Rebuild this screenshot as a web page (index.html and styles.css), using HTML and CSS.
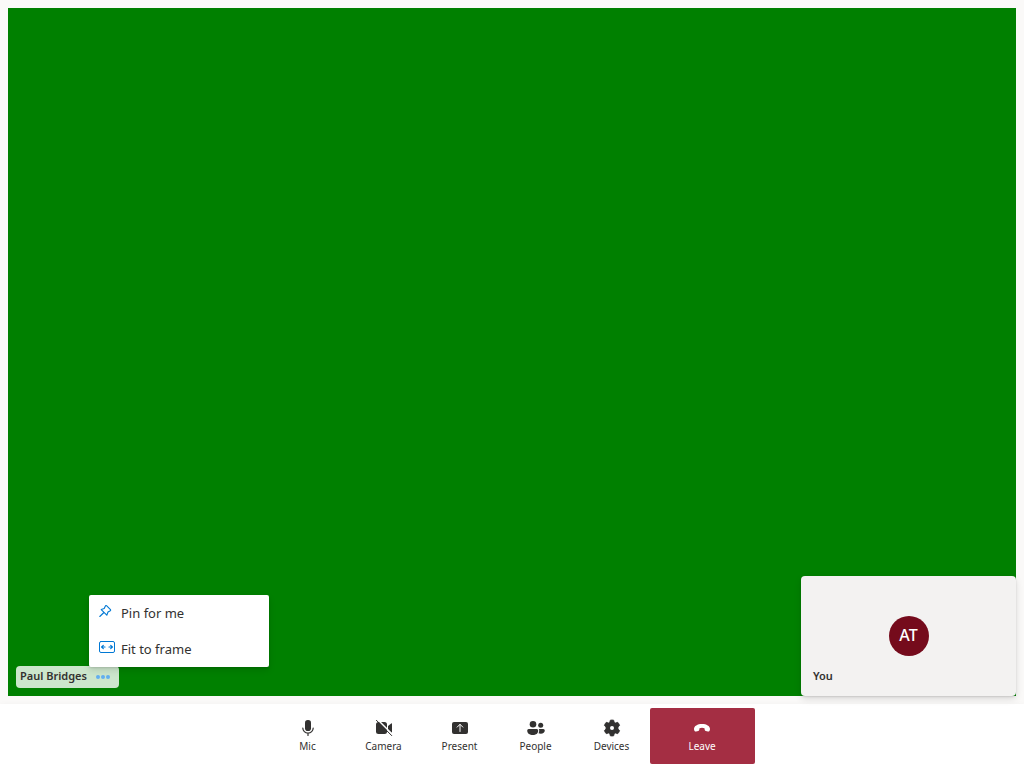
FILE: index.html
```html
<!DOCTYPE html>
<html lang="en">
<head>
<meta charset="utf-8">
<meta name="viewport" content="width=device-width, initial-scale=1">
<title>Call</title>
<link rel="stylesheet" href="styles.css">
</head>
<body>
<div class="call">
  <main class="stage">
    <section class="remote" aria-label="Video of Paul Bridges">
      <div class="name-tag">
        <span class="name">Paul Bridges</span>
        <button class="more" type="button" aria-label="More options" aria-expanded="true">
          <svg width="14" height="4" viewBox="0 0 14 4" fill="#62aff0" aria-hidden="true"><circle cx="2" cy="2" r="2"/><circle cx="7" cy="2" r="2"/><circle cx="12" cy="2" r="2"/></svg>
        </button>
        <div class="menu" role="menu">
          <button class="menu-item" type="button" role="menuitem">
            <svg width="16" height="16" viewBox="0 0 16 16" fill="none" stroke="#0078d4" stroke-width="1.1" stroke-linejoin="round" stroke-linecap="round" aria-hidden="true"><path d="M7.500 2.600 11.500 6.600Q12 7.300 11.300 7.800L9 9 7.800 12.200 2.200 6.600 5.200 5.500 6.400 3Q6.900 2.200 7.500 2.600ZM4.900 9.500.8 13.500"/></svg>
            <span>Pin for me</span>
          </button>
          <button class="menu-item" type="button" role="menuitem">
            <svg width="16" height="16" viewBox="0 0 16 16" fill="none" stroke="#0078d4" stroke-linejoin="round" stroke-linecap="round" aria-hidden="true"><rect x=".5" y="2.500" width="15" height="11" rx="1.500"/><path d="M6 8H2.800M4.300 6.300 2.600 8l1.700 1.700M10 8h3.200m-1.500-1.700L13.400 8l-1.700 1.700" stroke-width="1.200"/></svg>
            <span>Fit to frame</span>
          </button>
        </div>
      </div>
    </section>
    <section class="self" aria-label="Your video">
      <div class="avatar">AT</div>
      <div class="self-name">You</div>
    </section>
  </main>
  <footer class="controls">
    <button class="control" type="button">
      <svg width="20" height="20" viewBox="0 0 20 20" aria-hidden="true"><rect x="7" y="2" width="6" height="11" rx="2.800" fill="currentColor"/><path d="M4.800 10a5.200 5.200 0 0 0 10.400 0M10 15.200v2.300" fill="none" stroke="currentColor" stroke-width="1.200" stroke-linecap="round"/></svg>
      <span>Mic</span>
    </button>
    <button class="control" type="button">
      <svg width="20" height="20" viewBox="0 0 20 20" aria-hidden="true"><rect x="2" y="4" width="11" height="12" rx="2.500" fill="currentColor"/><path d="M14 8 17.200 5.400Q18 5 18 5.800v8.400q0 .8-.8.400L14 12Z" fill="currentColor"/><path d="M3.500 1.500 18.800 16.800" stroke="#fff" stroke-width="1.500"/><path d="m2.400 2.300 15.300 15.300" stroke="currentColor" stroke-linecap="round"/></svg>
      <span>Camera</span>
    </button>
    <button class="control" type="button">
      <svg width="20" height="20" viewBox="0 0 20 20" aria-hidden="true"><rect x="2" y="4" width="16" height="12" rx="2" fill="currentColor"/><path d="M10 13.500v-7M7.200 9.100 10 6.300l2.800 2.800" fill="none" stroke="#fff" stroke-linecap="round" stroke-linejoin="round"/></svg>
      <span>Present</span>
    </button>
    <button class="control" type="button">
      <svg width="20" height="20" viewBox="0 0 20 20" fill="currentColor" aria-hidden="true"><circle cx="7" cy="6.200" r="3.300"/><circle cx="14.700" cy="7.200" r="2.500"/><path d="M2.700 11h8.100A1.500 1.500 0 0 1 12.200 12.500C12.200 15.500 10 17 6.900 17s-5.700-1.500-5.700-4.500A1.500 1.500 0 0 1 2.700 11ZM12.700 11h4.600a1.500 1.500 0 0 1 1.500 1.500c0 2-1.600 3.200-4 3.200q-1.300 0-2.300-.4.700-1.200.7-2.800 0-.9-.5-1.500Z"/></svg>
      <span>People</span>
    </button>
    <button class="control" type="button">
      <svg width="20" height="20" viewBox="0 0 20 20" aria-hidden="true"><path d="M8.300 2.200Q10 1.800 11.700 2.200l.5 2.100 1.300.7 2.200-.7q1.400 1.400 1.900 3.200L16 9v2l1.600 1.500q-.5 1.800-1.900 3.200l-2.200-.7-1.300.7-.5 2.100q-1.700.4-3.400 0l-.5-2.100-1.300-.7-2.200.7q-1.400-1.400-1.900-3.200L4 11V9L2.400 7.500q.5-1.800 1.900-3.200l2.200.7 1.300-.7Z" fill="currentColor" stroke="currentColor" stroke-width=".8" stroke-linejoin="round"/><circle cx="10" cy="10" r="2" fill="#fff"/></svg>
      <span>Devices</span>
    </button>
    <button class="control leave" type="button">
      <svg width="20" height="20" viewBox="0 0 20 20" fill="currentColor" aria-hidden="true"><path d="M10 6C14.500 6 18 8 18 11q0 1.500-.8 2.200-.5.400-1.200.2l-2.300-.5q-.9-.3-1-1.200l-.2-1.500Q10 9.300 7.500 10.200l-.2 1.500q-.1.900-1 1.200L4 13.400q-.7.200-1.200-.2Q2 12.500 2 11C2 8 5.500 6 10 6Z"/></svg>
      <span>Leave</span>
    </button>
  </footer>
</div>
</body>
</html>
```

FILE: styles.css
```css
* {
  box-sizing: border-box;
}

body {
  margin: 0;
  font-family: "Noto Sans", "Open Sans", sans-serif;
  color: #323130;
  background: #faf9f8;
}

button {
  margin: 0;
  padding: 0;
  border: 0;
  background: none;
  font: inherit;
  color: inherit;
  cursor: pointer;
}

svg {
  display: block;
  flex: none;
}

.call {
  display: flex;
  flex-direction: column;
  min-height: 100vh;
}

.stage {
  position: relative;
  display: flex;
  flex: 1;
  padding: 8px;
}

.remote {
  display: flex;
  flex: 1;
  align-items: flex-end;
  padding: 8px;
  background: #008000;
}

.name-tag {
  position: relative;
  display: flex;
  align-items: center;
  gap: 9px;
  height: 22px;
  padding: 0 9px 0 4px;
  border-radius: 4px;
  background: rgba(255, 255, 255, 0.8);
  font-size: 11px;
  font-weight: 600;
  line-height: 20px;
}

.name {
  padding-bottom: 2px;
}

.menu {
  position: absolute;
  left: 73px;
  bottom: 21px;
  width: 180px;
  border-radius: 2px;
  background: #fff;
  box-shadow: 0 3px 7px rgba(0, 0, 0, 0.13), 0 1px 2px rgba(0, 0, 0, 0.11);
}

.menu-item {
  display: flex;
  align-items: center;
  gap: 6px;
  width: 100%;
  height: 36px;
  padding: 0 10px;
  font-size: 13px;
  font-weight: 400;
}

.menu-item svg {
  margin-bottom: 4px;
}

.self {
  position: absolute;
  right: 8px;
  bottom: 8px;
  display: grid;
  place-items: center;
  width: 215px;
  height: 120px;
  border-radius: 4px;
  background: #f3f2f1;
  box-shadow: 0 3px 7px rgba(0, 0, 0, 0.13), 0 1px 2px rgba(0, 0, 0, 0.11);
}

.avatar {
  display: grid;
  place-items: center;
  width: 40px;
  height: 40px;
  padding-bottom: 2px;
  border-radius: 50%;
  background: #750b1c;
  color: #fff;
  font-size: 16px;
  font-weight: 500;
}

.self-name {
  position: absolute;
  left: 12px;
  bottom: 10px;
  font-size: 11px;
  font-weight: 600;
  line-height: 20px;
}

.controls {
  display: flex;
  justify-content: center;
  padding: 4px;
  background: #fff;
  box-shadow: 0 3px 7px rgba(0, 0, 0, 0.08);
}

.control {
  display: flex;
  flex-direction: column;
  align-items: center;
  justify-content: center;
  width: 76px;
  height: 56px;
  border-radius: 2px;
  font-size: 10px;
  line-height: 16px;
}

.leave {
  width: 105px;
  background: #a42e43;
  color: #fff;
}
```
